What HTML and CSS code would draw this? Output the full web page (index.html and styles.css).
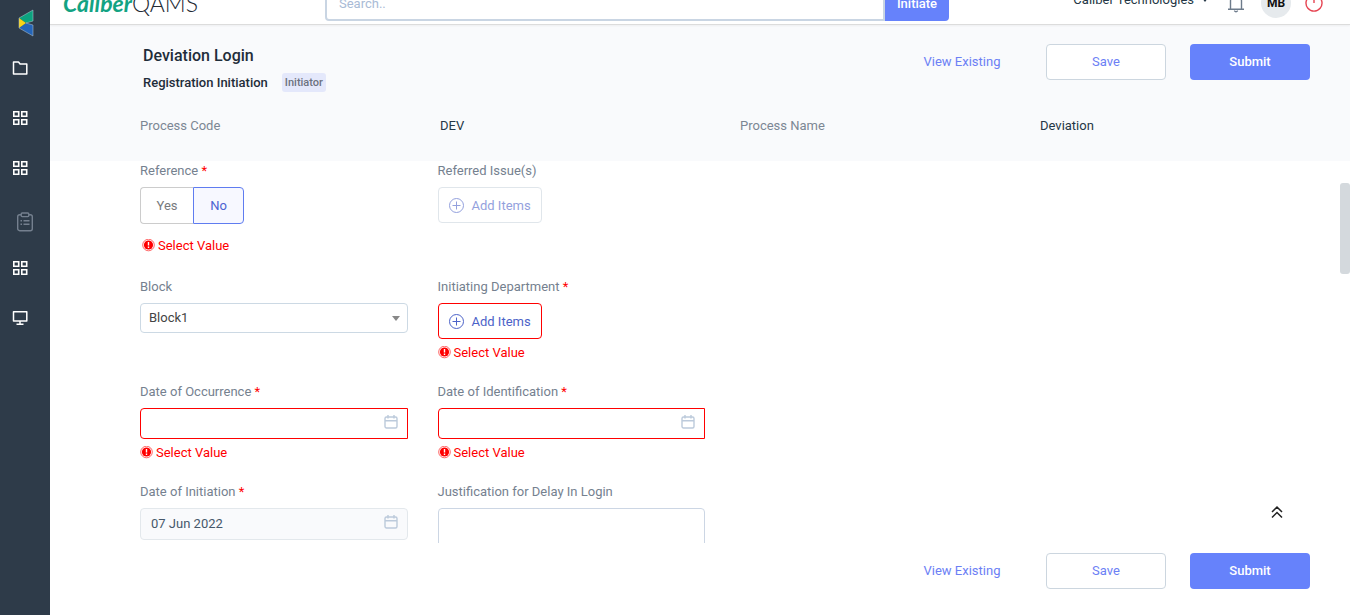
FILE: index.html
```html
<!DOCTYPE html>
<html lang="en">
<head>
<meta charset="utf-8">
<title>Deviation Login</title>
<link rel="stylesheet" href="styles.css">
</head>
<body>
<svg class="sprite" aria-hidden="true">
  <symbol id="i-grid" viewBox="0 0 16 16"><path d="M1.8 1.8h4.9v4.4H1.8zM9.8 1.8h4.9v4.4H9.8zM1.8 9.8h4.9v4.4H1.8zM9.8 9.8h4.9v4.4H9.8z" fill="none" stroke="currentColor" stroke-width="1.6"/></symbol>
  <symbol id="i-plus" viewBox="0 0 16 16"><g fill="none" stroke="currentColor"><circle cx="7.5" cy="7.5" r="7"/><path d="M7.5 3.5v8M3.5 7.5h8"/></g></symbol>
  <symbol id="i-cal" viewBox="0 0 14 14"><g fill="none" stroke="currentColor" stroke-width="1.4"><rect x="1" y="2" width="12" height="11" rx="1.5"/><path d="M1 5.8h12M4 0v3.6M10 0v3.6"/></g></symbol>
  <symbol id="i-err" viewBox="0 0 14 14"><circle cx="6.5" cy="6" r="5.8" fill="none" stroke="#f00" stroke-width=".6"/><circle cx="6.5" cy="6" r="4.6" fill="#f00"/><path d="M6.5 3v3.6M6.5 7.6V9" stroke="#fff" stroke-width="1.4"/></symbol>
</svg>
<div class="app">
  <nav class="sidebar" aria-label="Main">
    <a class="brand-mark" href="#" aria-label="Home"><svg width="16" height="28" viewBox="0 0 16 28"><path d="M15 1v11l-7 2-7-5z" fill="#0ca37f"/><path d="M15 27V16l-7-2-7 5z" fill="#2465b8"/><path d="M1 9l7 5-7 5z" fill="#f7d417"/><path d="M15 1v11l-7 2 7 2v11L1 19V9z" fill="none" stroke="#b9cbd6" stroke-width=".5"/></svg></a>
    <a class="nav-item" href="#" aria-label="Documents"><svg width="16" height="16" viewBox="0 0 16 16"><path d="M1.5 2h5l1.6 2H14.8v10H1.5z" fill="none" stroke="currentColor" stroke-width="1.5" stroke-linejoin="round"/></svg></a>
    <a class="nav-item" href="#" aria-label="Modules"><svg width="16" height="16"><use href="#i-grid"/></svg></a>
    <a class="nav-item" href="#" aria-label="Reports"><svg width="16" height="16"><use href="#i-grid"/></svg></a>
    <a class="nav-item nav-tasks" href="#" aria-label="Tasks"><svg width="18" height="20" viewBox="0 0 18 20"><g fill="none" stroke="currentColor" stroke-width="1.4"><rect x="1.7" y="2.7" width="14.6" height="16" rx="2"/><rect x="5.2" y="1" width="7.6" height="3.6" rx="1" fill="#2e3b49"/><path d="M4.5 8.8H6M7.5 8.8h6M4.5 12.2H6M7.5 12.2h6"/></g></svg></a>
    <a class="nav-item" href="#" aria-label="Analytics"><svg width="16" height="16"><use href="#i-grid"/></svg></a>
    <a class="nav-item" href="#" aria-label="Monitor"><svg width="16" height="16" viewBox="0 0 16 16"><path d="M1.5 1.8h13.3v9.2H1.5zM8 11v3M4.5 14.2h7" fill="none" stroke="currentColor" stroke-width="1.5" stroke-linejoin="round"/></svg></a>
  </nav>
  <div class="main">
    <header class="topbar">
      <div class="logo"><b>Caliber</b><span>QAMS</span></div>
      <div class="search">
        <input type="text" placeholder="Search.." aria-label="Search">
        <button type="button">Initiate</button>
      </div>
      <div class="account">
        <button type="button" class="company">Caliber Technologies <svg width="6" height="4" viewBox="0 0 6 4"><path d="M0 0h6L3 4z" fill="currentColor"/></svg></button>
        <button type="button" class="icon-btn bell" aria-label="Notifications"><svg width="18" height="20" viewBox="0 0 18 20"><path d="M1 16.3h16M3.5 16V8a5.5 5.5 0 0 1 11 0v8M9 1v1.5M7.3 17.6q1.7 2.4 3.4 0" fill="none" stroke="currentColor" stroke-width="1.4"/></svg></button>
        <span class="avatar">MB</span>
        <button type="button" class="icon-btn power" aria-label="Log out"><svg width="18" height="20" viewBox="0 0 18 20"><path d="M5 3.2a8 8 0 1 0 8 0M9 1v9" fill="none" stroke="currentColor" stroke-width="1.4"/></svg></button>
      </div>
    </header>
    <section class="page-head">
      <div class="title-row">
        <div class="titles">
          <h1>Deviation Login</h1>
          <div class="subtitle"><h2>Registration Initiation</h2><span class="tag">Initiator</span></div>
        </div>
        <div class="actions">
          <a class="btn" href="#">View Existing</a>
          <button class="btn btn-outline" type="button">Save</button>
          <button class="btn btn-primary" type="button">Submit</button>
        </div>
      </div>
      <dl class="process">
        <dt>Process Code</dt><dd>DEV</dd><dt>Process Name</dt><dd>Deviation</dd>
      </dl>
    </section>
    <div class="scroll-area">
      <form class="form">
        <div class="field col-first">
          <span class="label" id="l-ref">Reference <i>*</i></span>
          <div class="toggle" role="group" aria-labelledby="l-ref"><button type="button">Yes</button><button type="button" class="on">No</button></div>
          <p class="error inset"><svg width="14" height="14"><use href="#i-err"/></svg>Select Value</p>
        </div>
        <div class="field col-last">
          <span class="label">Referred Issue(s)</span>
          <button class="add" type="button" disabled><svg width="16" height="16"><use href="#i-plus"/></svg>Add Items</button>
        </div>
        <div class="field col-first">
          <label class="label" for="block">Block</label>
          <div class="select"><select id="block"><option>Block1</option></select></div>
        </div>
        <div class="field col-last">
          <span class="label">Initiating Department <i>*</i></span>
          <button class="add invalid" type="button"><svg width="16" height="16"><use href="#i-plus"/></svg>Add Items</button>
          <p class="error"><svg width="14" height="14"><use href="#i-err"/></svg>Select Value</p>
        </div>
        <div class="field col-first">
          <label class="label" for="occ">Date of Occurrence <i>*</i></label>
          <div class="date"><input class="invalid" id="occ" type="text"><svg width="14" height="14"><use href="#i-cal"/></svg></div>
          <p class="error"><svg width="14" height="14"><use href="#i-err"/></svg>Select Value</p>
        </div>
        <div class="field col-last">
          <label class="label" for="ident">Date of Identification <i>*</i></label>
          <div class="date"><input class="invalid" id="ident" type="text"><svg width="14" height="14"><use href="#i-cal"/></svg></div>
          <p class="error"><svg width="14" height="14"><use href="#i-err"/></svg>Select Value</p>
        </div>
        <div class="field col-first">
          <label class="label" for="init">Date of Initiation <i>*</i></label>
          <div class="date"><input id="init" type="text" value="07 Jun 2022" disabled><svg width="14" height="14"><use href="#i-cal"/></svg></div>
        </div>
        <div class="field col-last">
          <label class="label" for="just">Justification for Delay In Login</label>
          <textarea id="just" rows="4"></textarea>
        </div>
      </form>
      <div class="track"><div class="thumb"></div></div>
      <button class="to-top" type="button" aria-label="Back to top"><svg width="12" height="14" viewBox="0 0 12 14"><path d="M1 7l5-5 5 5M1 12.5l5-5 5 5" fill="none" stroke="currentColor" stroke-width="1.5"/></svg></button>
    </div>
    <footer class="actions page-foot">
      <a class="btn" href="#">View Existing</a>
      <button class="btn btn-outline" type="button">Save</button>
      <button class="btn btn-primary" type="button">Submit</button>
    </footer>
  </div>
</div>
</body>
</html>
```

FILE: styles.css
```css
* { box-sizing: border-box; }
body { margin: 0; overflow: hidden; font: 13px/18px Roboto, sans-serif; color: #253746; background: #fff; }
button, input, select, textarea { font: inherit; color: inherit; margin: 0; }
button { cursor: pointer; }
a { color: inherit; text-decoration: none; }
svg { display: block; flex: none; }
h1, h2, p, dl, dd { margin: 0; }
.sprite { position: absolute; width: 0; height: 0; }
.app { display: flex; height: 100vh; }

.sidebar { flex: none; width: 50px; background: #2e3b49; color: #fff; }
.brand-mark { display: flex; height: 43px; padding: 9px 0 0 18px; }
.nav-item { display: flex; align-items: center; height: 50px; padding-left: 12px; }
.nav-tasks { padding: 8px 0 0 16px; color: #75808f; }

.main { flex: 1; min-width: 0; display: flex; flex-direction: column; }

.topbar { flex: none; display: grid; grid-template-columns: 275px minmax(0, 624px) 1fr; align-items: center; height: 44px; margin-top: -19px; border-bottom: 1px solid #dcdcdc; box-shadow: 0 1px 2px #0000000d; position: relative; background: #fff; }
.logo { padding-left: 13px; font: 23px/24px Lato, sans-serif; color: #232a33; }
.logo b { font-style: italic; color: #12a383; }
.logo span { font-weight: 300; }
.search { display: flex; height: 36px; }
.search input { flex: 1; min-width: 0; padding: 2px 12px 0; border: 2px solid #c9d5e3; border-radius: 4px 0 0 4px; }
.search input::placeholder { color: #a9bbd6; }
.search button { width: 64px; padding: 2px 0 0; border: 0; border-radius: 0 4px 4px 0; background: #6682fb; color: #fff; font-weight: 500; }
.account { display: flex; align-items: center; justify-content: flex-end; padding-right: 27px; }
.company { display: flex; align-items: center; gap: 8px; padding: 0 0 5px; border: 0; background: none; margin-right: 19px; }
.icon-btn { padding: 0; border: 0; background: none; }
.bell { color: #6d7b8b; }
.avatar { width: 30px; margin: 0 14px 0 16px; border-radius: 50%; background: #e6eaed; color: #111; font-size: 12px; font-weight: 700; line-height: 30px; text-align: center; }
.power { color: #e64553; }

.page-head { flex: none; height: 136px; padding: 19px 10px 0 90px; background: #f9fafc; }
.title-row { display: flex; justify-content: space-between; }
.titles { padding-left: 3px; }
h1 { font-size: 16px; line-height: 24px; font-weight: 500; color: #1f2d3a; }
.subtitle { display: flex; align-items: center; gap: 14px; margin-top: 5px; }
h2 { font-size: 13px; line-height: 18px; font-weight: 500; color: #1f2d3a; }
.tag { padding: 0 3px; border-radius: 3px; background: #e4e8fb; color: #6c7280; font-size: 11px; font-weight: 500; line-height: 19px; }
.actions { display: flex; justify-content: flex-end; gap: 24px; padding-right: 30px; }
.btn { width: 120px; height: 36px; padding: 0; border: 1px solid transparent; border-radius: 4px; background: none; color: #6c80f5; line-height: 34px; text-align: center; }
.btn-outline { border-color: #ccd6df; background: #fff; }
.btn-primary { background: #6682fb; color: #fff; font-weight: 500; }
.process { display: grid; grid-template-columns: repeat(4, 1fr); margin-top: 25px; }
.process dt { color: #7c8794; }

.scroll-area { flex: 1; min-height: 0; position: relative; display: flex; overflow: hidden; }
.form { flex: 1; display: grid; grid-template-columns: repeat(4, 1fr); align-content: start; row-gap: 21px; height: max-content; padding: 1px 10px 0 90px; }
.field { padding-right: 30px; }
.col-first { grid-column: 1; }
.col-last { grid-column: 2; }
.label { display: block; margin-bottom: 7px; color: #75818f; }
.label i { color: #f00; font-style: normal; }
.toggle { display: flex; }
.toggle button { width: 53px; height: 37px; padding: 0; border: 1px solid #ccc; border-right: 0; border-radius: 4px 0 0 4px; background: #fff; color: #77797c; }
.toggle .on { width: 51px; border: 1px solid #5f7cf0; border-radius: 0 4px 4px 0; background: #f7f8ff; color: #4c63d2; }
.error { display: flex; align-items: center; gap: 2px; margin-top: 5px; color: #f00; }
.inset { margin-top: 11px; padding: 2px; }
.add { display: flex; align-items: center; gap: 7px; height: 36px; padding: 1px 10px 0; border: 1px solid #ccd6df; border-radius: 4px; background: #fff; color: #4c62c8; }
.add:disabled { opacity: .6; }
.add.invalid { border-color: #f00; }
.select { position: relative; }
.select::after { content: ""; position: absolute; right: 8px; top: 13px; border: 4px solid transparent; border-top: 5px solid #888; border-bottom: 0; }
select { display: block; appearance: none; width: 100%; height: 30px; padding: 0 8px; border: 1px solid #ccd9e4; border-radius: 4px; background: #fff; color: #444; }
.date { position: relative; color: #bccadb; }
.date input { display: block; width: 100%; height: 31px; padding: 0 10px; border: 1px solid #ccd6df; border-radius: 4px 0 0 4px; background: #fff; color: #46586b; }
.date input.invalid { border-color: #f00; }
.date input:disabled { height: 32px; padding-bottom: 2px; border-color: #e3e8ec; border-radius: 4px; background: #f9fafc; }
.date svg { position: absolute; right: 10px; top: 7px; }
textarea { display: block; width: 100%; resize: none; border: 1px solid #ccd6e4; border-radius: 4px; background: #fff; }
.track { flex: none; width: 10px; padding-top: 22px; }
.thumb { height: 91px; border-radius: 3px; background: #d4d9dd; }
.to-top { position: absolute; right: 67px; bottom: 24px; padding: 0; border: 0; background: none; color: #222; }
.page-foot { flex: none; padding: 10px 40px 26px; }
```
